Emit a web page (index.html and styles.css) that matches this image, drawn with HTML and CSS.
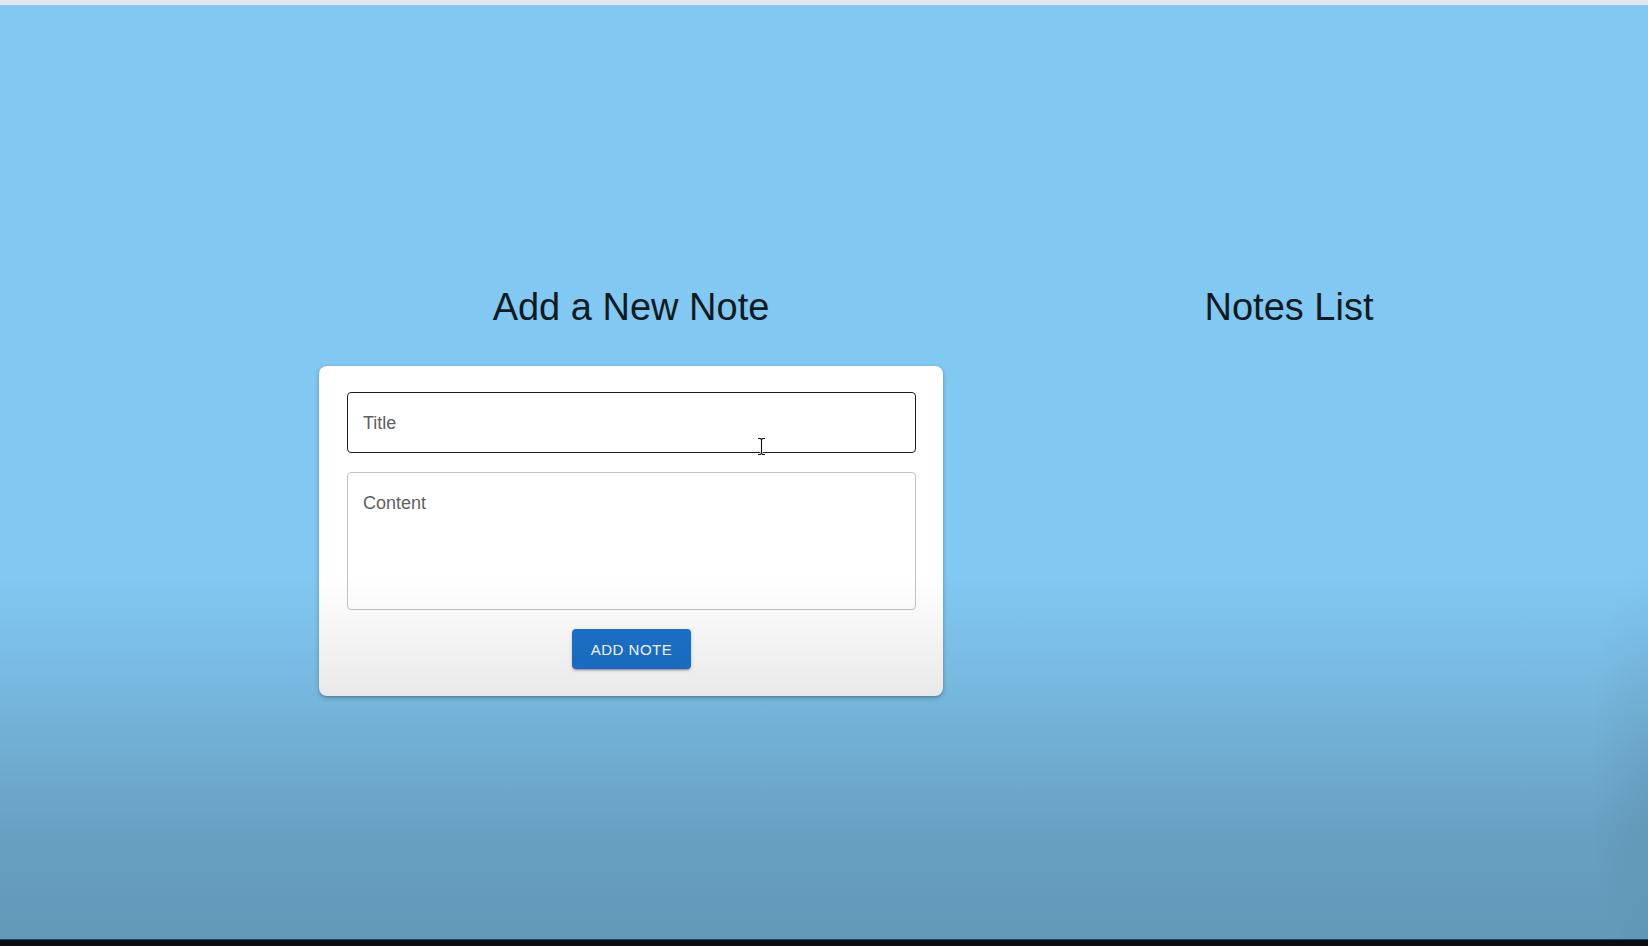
FILE: index.html
```html
<!DOCTYPE html>
<html lang="en">
<head>
<meta charset="utf-8">
<title>Notes</title>
<link rel="stylesheet" href="styles.css">
</head>
<body>
<div class="topbar"></div>
<main class="page">
  <div class="columns">
    <section class="col">
      <h2 class="heading">Add a New Note</h2>
      <form class="card">
        <div class="field">
          <input class="input" type="text" placeholder="Title">
          <svg class="cursor" width="9" height="19" viewBox="0 0 9 19" aria-hidden="true">
            <path d="M1 1.5h2.2l1.3 1 1.3-1H8M4.5 2.5v14M1 17.5h2.2l1.3-1 1.3 1H8" fill="none" stroke="#fff" stroke-width="2.6"/>
            <path d="M1 1.5h2.2l1.3 1 1.3-1H8M4.5 2.5v14M1 17.5h2.2l1.3-1 1.3 1H8" fill="none" stroke="#111" stroke-width="1.1"/>
          </svg>
        </div>
        <textarea class="textarea" placeholder="Content"></textarea>
        <div class="actions">
          <button type="button" class="btn">ADD NOTE</button>
        </div>
      </form>
    </section>
    <section class="col">
      <h2 class="heading">Notes List</h2>
    </section>
  </div>
</main>
<div class="footer"></div>
<div class="shade"></div>
</body>
</html>
```
FILE: styles.css
```css
html, body {
  margin: 0;
  padding: 0;
  height: 100%;
}
body {
  width: 1648px;
  height: 946px;
  overflow: hidden;
  display: flex;
  flex-direction: column;
  font-family: "Liberation Sans", Arial, sans-serif;
  background: #81c8f2;
  position: relative;
}
.topbar {
  height: 5px;
  background: #e4e6e9;
  flex: none;
}
.page {
  flex: 1;
  background: #81c8f2;
  padding-top: 280px;
}
.columns {
  display: grid;
  grid-template-columns: 658px 658px;
  padding-left: 302px;
}
.col {
  display: flex;
  flex-direction: column;
  align-items: center;
}
.heading {
  margin: 0;
  font-size: 38px;
  line-height: 44px;
  font-weight: 400;
  color: #111a21;
}
.card {
  margin-top: 37px;
  width: 624px;
  box-sizing: border-box;
  background: #fff;
  border-radius: 8px;
  padding: 26px 27px 27px 28px;
  box-shadow: 0 2px 5px rgba(0,0,0,0.22), 0 1px 2px rgba(0,0,0,0.12);
  display: flex;
  flex-direction: column;
}
.field {
  position: relative;
}
.input {
  display: block;
  width: 100%;
  height: 61px;
  box-sizing: border-box;
  border: 1px solid #1d1d1d;
  border-radius: 4px;
  padding: 2px 15px 0;
  font: 18px "Liberation Sans", Arial, sans-serif;
  color: #222;
  background: #fff;
  outline: none;
}
.input::placeholder,
.textarea::placeholder {
  color: #5f5f5f;
  opacity: 1;
}
.cursor {
  position: absolute;
  left: 410px;
  top: 45px;
}
.textarea {
  display: block;
  margin-top: 19px;
  width: 100%;
  height: 138px;
  box-sizing: border-box;
  border: 1px solid #c3c3c3;
  border-radius: 4px;
  padding: 20px 15px;
  font: 18px/21px "Liberation Sans", Arial, sans-serif;
  resize: none;
  background: #fff;
  outline: none;
}
.actions {
  margin-top: 19px;
  display: flex;
  justify-content: center;
}
.btn {
  height: 40px;
  width: 119px;
  border: none;
  border-radius: 4px;
  background: #1b72cc;
  color: #fff;
  font: 15px "Liberation Sans", Arial, sans-serif;
  letter-spacing: 0.5px;
  box-shadow: 0 3px 1px -2px rgba(0,0,0,0.2), 0 2px 2px rgba(0,0,0,0.14), 0 1px 5px rgba(0,0,0,0.12);
  cursor: pointer;
}
.footer {
  height: 7px;
  flex: none;
  background: #0b121a;
  border-top: 1px solid #2b5876;
  box-sizing: border-box;
}
.shade {
  position: absolute;
  inset: 0;
  pointer-events: none;
  background:
    radial-gradient(ellipse 60px 220px at 100% 82%, rgba(0,0,0,0.06), rgba(0,0,0,0) 100%),
    linear-gradient(to bottom, rgba(0,0,0,0) 0%, rgba(0,0,0,0) 61%, rgba(0,0,0,0.09) 74%, rgba(0,0,0,0.2) 88%, rgba(0,0,0,0.24) 100%);
}
```
